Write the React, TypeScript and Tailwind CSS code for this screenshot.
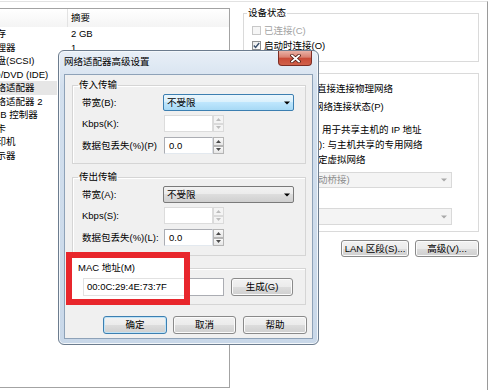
import type { ReactNode } from 'react'

const DEVICES: [string, string][] = [
  ['内存', '2 GB'],
  ['处理器', '1'],
  ['硬盘(SCSI)', ''],
  ['CD/DVD (IDE)', ''],
  ['网络适配器', ''],
  ['网络适配器 2', ''],
  ['USB 控制器', ''],
  ['声卡', ''],
  ['打印机', ''],
  ['显示器', ''],
]

const BTN_BG = 'bg-[linear-gradient(#f2f2f2,#ebebeb_50%,#dddddd_50%,#cfcfcf)]'

function Btn({ children, className = '', primary }: { children: ReactNode; className?: string; primary?: boolean }) {
  return (
    <div
      className={`flex shrink-0 items-center justify-center rounded-[3px] border ${BTN_BG} ${
        primary ? 'border-[#3c7fb1] shadow-[inset_0_0_0_1px_#bfe3f7]' : 'border-[#8a8a8a] shadow-[inset_0_0_0_1px_#fbfbfb]'
      } ${className}`}
    >
      {children}
    </div>
  )
}

function Arrow({ color = '#000' }: { color?: string }) {
  return (
    <svg width="6" height="4" viewBox="0 0 6 4" className="shrink-0">
      <path d="M0 0.5h6L3 3.5z" fill={color} />
    </svg>
  )
}

function Combo({ focused }: { focused?: boolean }) {
  return (
    <div
      className={`flex h-[17px] w-[131px] items-center rounded-[2px] border pl-[3px] pr-[3px] ${
        focused
          ? 'border-[#3c7fb1] bg-[linear-gradient(#eaf6fd,#d9f0fc_50%,#bee6fd_50%,#a7d9f5)]'
          : `border-[#7a7a7a] ${BTN_BG}`
      }`}
    >
      <span className="flex-1">不受限</span>
      <Arrow />
    </div>
  )
}

function SpinHalf({ up, dim }: { up?: boolean; dim?: boolean }) {
  return (
    <div className={`flex h-[8.5px] items-center justify-center border ${dim ? 'border-[#dadada] bg-[#f4f4f4]' : 'border-[#b5b5b5] bg-[linear-gradient(#fafafa,#e6e6e6)]'}`}>
      <svg width="5" height="3" viewBox="0 0 5 3">
        <path d={up ? 'M0 3h5L2.5 0z' : 'M0 0h5L2.5 3z'} fill={dim ? '#bcbcbc' : '#4a4a4a'} />
      </svg>
    </div>
  )
}

function Spin({ value, dim }: { value?: string; dim?: boolean }) {
  return (
    <div className="ml-px flex h-[17px]">
      <div
        className={`flex w-[49px] items-center border bg-white pl-[4px] ${
          dim ? 'border-[#dcdcdc]' : 'border-[#abadb3] border-r-[#dbdfe6] border-b-[#e3e9ef]'
        }`}
      >
        {value}
      </div>
      <div className="flex w-[11px] flex-col">
        <SpinHalf up dim={dim} />
        <SpinHalf dim={dim} />
      </div>
    </div>
  )
}

function Row({ label, children, className = '' }: { label: string; children: ReactNode; className?: string }) {
  return (
    <div className={`flex h-[17px] items-center pl-[9px] ${className}`}>
      <span className="w-[81px] shrink-0 whitespace-nowrap">{label}</span>
      {children}
    </div>
  )
}

function Group({ title, children, className = '' }: { title: string; children: ReactNode; className?: string }) {
  return (
    <fieldset className={`ml-[7px] w-[234px] border border-[#d5d5d5] shadow-[inset_1px_1px_0_#fff] ${className}`}>
      <legend className="ml-[5px] px-px leading-[10px]">{title}</legend>
      {children}
    </fieldset>
  )
}

// text whose start lies under the dialog: prefix is right-aligned into a fixed width
function Hidden({ w, prefix, text, className = '' }: { w: string; prefix: string; text: string; className?: string }) {
  return (
    <div className={`flex h-[10px] items-center whitespace-pre ${className}`}>
      <span className={`flex shrink-0 justify-end overflow-hidden ${w}`}>{prefix}</span>
      <span>{text}</span>
    </div>
  )
}

function Check({ label, checked, disabled, className = '' }: { label: string; checked?: boolean; disabled?: boolean; className?: string }) {
  return (
    <div className={`flex h-[9px] items-center pl-[8px] ${className}`}>
      <span
        className={`flex h-[9px] w-[9px] items-center justify-center border ${
          disabled ? 'border-[#c8c8c8] bg-[#f6f6f6]' : 'border-[#8e8f8f] bg-[linear-gradient(135deg,#e9e9e9,#ffffff)]'
        }`}
      >
        {checked && (
          <svg width="7" height="7" viewBox="0 0 7 7">
            <path d="M0.8 3.6l1.8 1.8L6.2 1" stroke="#3a4f6a" strokeWidth="1.4" fill="none" />
          </svg>
        )}
      </span>
      <span className={`ml-[3px] ${disabled ? 'text-[#a3a3a3]' : ''}`}>{label}</span>
    </div>
  )
}

export default function App() {
  return (
    <div className="relative h-[390px] w-[492px] overflow-hidden bg-white font-[family-name:Liberation_Sans,Noto_Sans_CJK_SC,sans-serif] text-[9.5px] leading-none text-black">
      {/* settings window behind */}
      <div className="mt-px flex h-[389px] w-[488px] border-t border-r border-t-[#e2e2e2] border-r-[#9a9a9a]">
        <div className="ml-[-80px] mt-[6px] h-[380px] w-[310px] shrink-0 border border-[#a3a3a3]">
          <div className="flex h-[18px] bg-[linear-gradient(#ffffff,#f4f4f4)]">
            <div className="w-[147px] border-r border-[#e3e3e3]" />
            <div className="flex items-center pl-[3px]">摘要</div>
          </div>
          {DEVICES.map(([name, summary], i) => (
            <div key={name} className="flex h-[13.5px] items-center">
              <div className={`flex h-full w-[136px] shrink-0 items-center pl-[66px] whitespace-nowrap ${i === 4 ? 'bg-[#e6e6e6]' : ''}`}>
                {name}
              </div>
              <div className="pl-[14px]">{summary}</div>
            </div>
          ))}
        </div>

        <div className="flex flex-1 flex-col pl-[13px] pr-[8px]">
          <fieldset className="mt-[6px] h-[54px] w-[236px] border border-[#dadada]">
            <legend className="ml-[3px] px-px leading-[10px]">设备状态</legend>
            <Check label="已连接(C)" disabled className="mt-[8px]" />
            <Check label="启动时连接(O)" checked className="mt-[6px]" />
          </fieldset>

          <div className="mt-[11px] h-[159px] w-[236px] border border-[#dadada]">
            <Hidden w="w-[73px]" prefix="桥接模式(B): " text="直接连接物理网络" className="mt-[10px]" />
            <Hidden w="w-[70px]" prefix="复制物理" text="网络连接状态(P)" className="mt-[8px]" />
            <Hidden w="w-[78px]" prefix="NAT 模式(N): " text="用于共享主机的 IP 地址" className="mt-[13px]" />
            <Hidden w="w-[75px]" prefix="仅主机模式(H" text="): 与主机共享的专用网络" className="mt-[5px]" />
            <Hidden w="w-[74px]" prefix="自定义(U): 特" text="定虚拟网络" className="mt-[5px]" />
            <div className="ml-[16px] mt-[7px] flex h-[16px] w-[192px] items-center border border-[#d9d9d9] bg-[#f4f4f4] pr-[4px] text-[#8e8e8e]">
              <span className="flex w-[57px] shrink-0 justify-end overflow-hidden whitespace-nowrap">VMnet0 (自</span>
              <span className="flex-1">动桥接)</span>
              <Arrow color="#a8a8a8" />
            </div>
            <div className="ml-[16px] mt-[20px] flex h-[17px] w-[192px] items-center justify-end border border-[#d9d9d9] bg-[#f4f4f4] pr-[4px]">
              <Arrow color="#a8a8a8" />
            </div>
          </div>

          <div className="mt-[8px] flex w-[236px] justify-end">
            <Btn className="h-[17px] w-[68px]">LAN 区段(S)...</Btn>
            <Btn className="ml-[6px] h-[17px] w-[64px]">高级(V)...</Btn>
          </div>
        </div>
      </div>

      {/* advanced settings dialog */}
      <div className="absolute left-[58px] top-[50px] flex h-[295px] w-[261px] flex-col rounded-[6px] border border-[#6c7c8e] bg-[linear-gradient(#e8eff7,#d3e0ee_12%,#c9d8e9)] px-[5px] pb-[5px] shadow-[inset_0_0_0_1px_#f3f7fb]">
        <div className="flex h-[23px] shrink-0 items-start">
          <span className="mt-[6px] leading-[10px]">网络适配器高级设置</span>
          <div className="ml-auto mr-px flex h-[15px] w-[34px] items-center justify-center rounded-b-[4px] border border-t-0 border-[#7d2d24] bg-[linear-gradient(#eab2a6,#d98070_45%,#c94a36_50%,#d0614a)]">
            <svg width="11" height="9" viewBox="0 0 11 9">
              <path d="M2 1.5l7 6M9 1.5l-7 6" stroke="#4d1a12" strokeWidth="3.4" strokeLinecap="square" />
              <path d="M2 1.5l7 6M9 1.5l-7 6" stroke="#fff" strokeWidth="1.8" strokeLinecap="square" />
            </svg>
          </div>
        </div>

        <div className="flex h-[265px] flex-col border border-[#8ea2b8] bg-[#f0f0f0]">
          <Group title="传入传输" className="mt-[5px] h-[84px]">
            <Row label="带宽(B):" className="mt-[4px]">
              <Combo focused />
            </Row>
            <Row label="Kbps(K):" className="mt-[4px]">
              <Spin dim />
            </Row>
            <Row label="数据包丢失(%)(P)" className="mt-[5px]">
              <Spin value="0.0" />
            </Row>
          </Group>

          <Group title="传出传输" className="mt-[8px] h-[84px]">
            <Row label="带宽(A):" className="mt-[4px]">
              <Combo />
            </Row>
            <Row label="Kbps(S):" className="mt-[4px]">
              <Spin dim />
            </Row>
            <Row label="数据包丢失(%)(L):" className="mt-[5px]">
              <Spin value="0.0" />
            </Row>
          </Group>

          <div className="ml-[7px] mt-[12px] flex h-[37px] w-[234px] items-start border border-[#d5d5d5] shadow-[inset_1px_1px_0_#fff]">
            <div className="ml-[10px] mt-[9px] h-[18px] w-[141px] border border-[#abadb3] bg-white" />
            <Btn className="ml-[7px] mt-[9px] h-[18px] w-[62px]">生成(G)</Btn>
          </div>

          <div className="mt-[11px] flex pl-[38px]">
            <Btn primary className="h-[18px] w-[64px]">确定</Btn>
            <Btn className="ml-[6px] h-[18px] w-[63px]">取消</Btn>
            <Btn className="ml-[7px] h-[18px] w-[64px]">帮助</Btn>
          </div>
        </div>
      </div>

      {/* red highlight box */}
      <div className="absolute left-[66px] top-[252px] h-[53px] w-[124px] overflow-hidden border-[6px] border-[#e8262c] bg-white">
        <div className="mt-[5px] h-[10px] pl-[6px] leading-[10px] whitespace-nowrap">MAC 地址(M)</div>
        <div className="ml-[11px] mt-[5px] flex h-[18px] w-[141px] items-center border border-[#e2e2e2] pl-[3px] whitespace-nowrap">
          00:0C:29:4E:73:7F
        </div>
      </div>
    </div>
  )
}
